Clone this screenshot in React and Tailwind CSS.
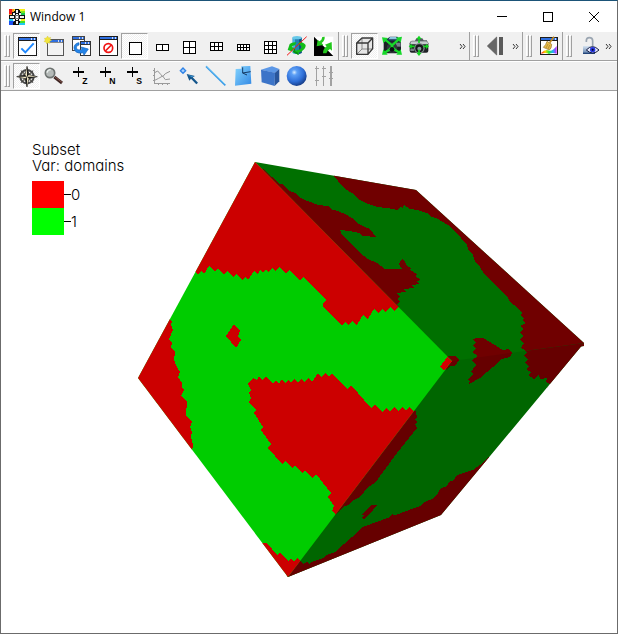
import React, { useState } from 'react';

// Every toolbar icon is drawn on a 60 x 60 grid and shown at 20px
function Icon({ children, crisp }) {
    return (
        <svg viewBox="0 0 60 60" className="w-5 h-5 overflow-visible shrink-0" fill="none" shapeRendering={crisp ? "crispEdges" : "auto"} aria-hidden="true">
            {children}
        </svg>
    );
}

// Small window with a blue title bar, used in several icons
function MiniWindow({ x, y, w, h, edge = "#1c1c1c" }) {
    return (
        <g shapeRendering="crispEdges">
            <rect x={x} y={y} width={w} height={h} fill={edge} />
            <rect x={x + 3} y={y + 12} width={w - 6} height={h - 15} fill="#fff" />
            <rect x={x + 3} y={y + 3} width={w - 6} height="6" fill="#2f6fe0" />
            <rect x={x + w - 18} y={y + 3} width="3" height="6" fill="#cfdcf5" />
            <rect x={x + w - 9} y={y + 3} width="3" height="6" fill="#cfdcf5" />
        </g>
    );
}

// Layout icon: a box split in cols x rows
function GridIcon({ x, y, w, h, cols, rows }) {
    const lines = [];
    for (let i = 1; i < cols; i++) lines.push(<path key={`c${i}`} d={`M${x + (w * i) / cols} ${y}v${h}`} />);
    for (let i = 1; i < rows; i++) lines.push(<path key={`r${i}`} d={`M${x} ${y + (h * i) / rows}h${w}`} />);
    return (
        <Icon crisp>
            <g stroke="#000" strokeWidth="3">
                <rect x={x} y={y} width={w} height={h} fill="#fff" />
                {lines}
            </g>
        </Icon>
    );
}

function AxisIcon({ letter }) {
    return (
        <Icon>
            <path d="M22 2v32M6 18h32" stroke="#000" strokeWidth="4" shapeRendering="crispEdges" />
            <text x="34" y="53" fill="#000" fontSize="26" fontWeight="700" fontFamily="Liberation Sans, sans-serif">{letter}</text>
        </Icon>
    );
}

const icons = {
    active: (
        <Icon>
            <MiniWindow x={3} y={2} w={57} h={59} />
            <path d="M13 37L25 49L50 22" stroke="#1e88ff" strokeWidth="6" />
        </Icon>
    ),
    newWindow: (
        <Icon>
            <MiniWindow x={9} y={8} w={50} h={52} edge="#555" />
            <rect x="12" y="20" width="44" height="37" fill="#f2f2f2" />
            <path d="M11 0l3 6 6-2-2 6 5 3-6 3 1 6-6-2-4 4-2-6-6-1 4-5-3-5 6-1z" fill="#f3e63c" stroke="#c9b92a" />
        </Icon>
    ),
    clone: (
        <Icon>
            <MiniWindow x={3} y={1} w={40} h={43} edge="#444" />
            <MiniWindow x={27} y={15} w={32} h={45} edge="#333" />
            <path d="M24 20C4 22 4 48 24 51q6 1 12-1l3 8 13-19-21-6 2 8q-14 3-17-4-2-8 8-10z" fill="#2484e8" stroke="#1663ba" strokeWidth="2" />
        </Icon>
    ),
    remove: (
        <Icon>
            <MiniWindow x={3} y={1} w={56} h={60} />
            <circle cx="31" cy="36" r="13" stroke="#f01414" strokeWidth="5" />
            <path d="M22 45L40 27" stroke="#f01414" strokeWidth="5" />
        </Icon>
    ),
    one: <GridIcon x={14} y={18} w={36} h={36} cols={1} rows={1} />,
    two: <GridIcon x={13} y={24} w={36} h={18} cols={2} rows={1} />,
    four: <GridIcon x={13} y={15} w={36} h={36} cols={2} rows={2} />,
    six: <GridIcon x={13} y={20} w={36} h={24} cols={3} rows={2} />,
    eight: <GridIcon x={13} y={24} w={36} h={18} cols={4} rows={2} />,
    nine: <GridIcon x={13} y={15} w={36} h={36} cols={3} rows={3} />,
    spin: (
        <Icon>
            <path d="M17 5v46q13 6 27 0V5z" fill="#2380b4" />
            <path d="M17 5v46l7 3V5z" fill="#45b4e0" />
            <path d="M36 5h8v46l-8 3z" fill="#134d80" />
            <ellipse cx="30" cy="5" rx="14" ry="5" fill="#67c8e8" />
            <path d="M2 42L8 24q8-7 20-5l-4 9q-8 0-10 5l8 3-8 10z" fill="#12bd18" />
            <path d="M24 36l2 8q14-2 18-10-2-7-10-9l2-7q14 0 20 9 2 14-22 24l1 6-18-9z" fill="#12bd18" />
            <path d="M24 36l-6 12 17 9-1-6-10-5z" fill="#088c10" />
            <path d="M0 58L59 2" stroke="#f01818" strokeWidth="3" />
        </Icon>
    ),
    invert: (
        <Icon>
            <rect x="0" y="2" width="58" height="58" fill="#fff" />
            <path d="M0 2v58h58z" fill="#000" />
            <path d="M32 2q1 12-9 19l5 6-20 4 3-20 5 5q8-4 9-13z" fill="#22c81c" />
            <path d="M27 52q0-14 11-21l-5-5 20-8 1 26-6-5q-8 4-11 13z" fill="#22c81c" />
        </Icon>
    ),
    box: (
        <Icon>
            <path d="M5 21L21 6h32v32L40 55H5z" fill="#e6e6e6" />
            <path d="M21 6v33h32M21 39L5 55" stroke="#8a8a8a" strokeWidth="3" />
            <path d="M5 21h34v34H5zM5 21L21 6h32L39 21M53 6v32L39 55" stroke="#3a3a3a" strokeWidth="4" strokeLinejoin="round" />
        </Icon>
    ),
    cameraCross: (
        <Icon>
            <path d="M10 12L24 2h22l8 10v10H10z" fill="#1d3550" />
            <path d="M24 3h18l4 7H20z" fill="#8cc4e0" />
            <rect x="5" y="16" width="52" height="36" rx="4" fill="#1b1f24" />
            <rect x="42" y="20" width="14" height="12" fill="#77808a" />
            <circle cx="30" cy="35" r="16" fill="#30363c" />
            <path d="M8 10Q24 22 30 28Q40 20 52 8M8 50Q22 44 30 32Q40 44 52 50" stroke="#17d82a" strokeWidth="7" />
            <path d="M0 4l18 2L4 22zM60 2L42 5l14 15zM0 56l17 0L4 40zM60 56l-17 0 13-16z" fill="#17d82a" />
            <circle cx="30" cy="40" r="7" fill="#0c1014" />
        </Icon>
    ),
    cameraPan: (
        <Icon>
            <path d="M8 14h10l4-7h18l4 6h10v8H6z" fill="#555c61" />
            <rect x="2" y="16" width="56" height="34" rx="6" fill="#202326" />
            <path d="M4 20q0-4 6-4h40q6 0 7 4v5H4z" fill="#c4cacd" />
            <rect x="4" y="38" width="11" height="7" fill="#767e83" />
            <circle cx="31" cy="37" r="16" fill="#7f878c" />
            <circle cx="31" cy="37" r="12" fill="#15181a" />
            <circle cx="31" cy="38" r="6" fill="#8d979d" />
            <path d="M30 6v15M30 41v14M4 31h13M43 31h13" stroke="#12d51f" strokeWidth="5" />
            <path d="M30-1l8 10H22zM30 60l8-10H22zM-1 31l9-8v16zM60 31l-9-8v16z" fill="#12d51f" />
        </Icon>
    ),
    stepBack: (
        <Icon>
            <path d="M4 30L32 3v54z" fill="#666" stroke="#555" strokeWidth="2" />
            <rect x="39" y="3" width="12" height="54" fill="#5a5a5a" />
        </Icon>
    ),
    clear: (
        <Icon>
            <defs>
                <linearGradient id="rainbow" x1="0" x2="1" y1="0" y2="0">
                    <stop offset="0" stopColor="#ff2020" />
                    <stop offset=".25" stopColor="#ffd800" />
                    <stop offset=".5" stopColor="#25e83c" />
                    <stop offset=".75" stopColor="#20b0ff" />
                    <stop offset="1" stopColor="#d020ff" />
                </linearGradient>
            </defs>
            <MiniWindow x={2} y={2} w={54} h={56} />
            <path d="M7 50q12-12 24-6 10 2 22-14v23q-14-5-23 1-9-6-23-1z" fill="url(#rainbow)" />
            <path d="M45 2L32 20" stroke="#c08a20" strokeWidth="5" />
            <path d="M24 16l14 9q0 12-7 17L13 34q8-7 11-18z" fill="#e8bc48" stroke="#96702a" strokeWidth="2" />
            <path d="M27 24l-6 12M32 27l-5 12" stroke="#a67c2e" strokeWidth="2" />
        </Icon>
    ),
    lock: (
        <Icon>
            <defs>
                <linearGradient id="lockBody" x1="0" x2="0" y1="0" y2="1">
                    <stop offset="0" stopColor="#d8e4f2" />
                    <stop offset="1" stopColor="#5a7ca8" />
                </linearGradient>
            </defs>
            <path d="M22 18v-4q0-9 9-9 10 0 10 10v16" stroke="#9aa5b1" strokeWidth="5" />
            <rect x="12" y="30" width="36" height="23" fill="url(#lockBody)" />
            <rect x="12" y="50" width="36" height="4" fill="#24457a" />
            <path d="M22 42q18-20 38 0-18 18-38 0z" fill="#e6ecff" stroke="#151a40" strokeWidth="3" />
            <circle cx="41" cy="41" r="8" fill="#2736e0" />
            <circle cx="41" cy="41" r="3" fill="#05051c" />
        </Icon>
    ),
    navigate: (
        <Icon>
            <circle cx="30" cy="32" r="20" stroke="#4a4a4a" strokeWidth="6" />
            <circle cx="30" cy="32" r="12" stroke="#777" strokeWidth="2" />
            <path d="M12 14l16 12 2-3 4 3 14-12-12 15 3 3-3 4 12 14-14-12-4 4-3-4-15 12 12-14-3-4 3-3z" fill="#d8ceaa" stroke="#333" strokeWidth="2" />
            <path d="M30 1l6 25 25 6-25 6-6 25-6-25-25-6 25-6z" fill="#f2e8c4" stroke="#222" strokeWidth="2" />
            <path d="M30 1v31l6-6zM60 32H30l6 6zM30 62V32l-6 6zM0 32h30l-6-6z" fill="#1c1c1c" />
        </Icon>
    ),
    zoom: (
        <Icon>
            <path d="M31 33L54 51" stroke="#3d2422" strokeWidth="9" />
            <path d="M33 33L54 49" stroke="#8a5a50" strokeWidth="3" />
            <circle cx="18" cy="21" r="14" fill="#b5bab8" stroke="#6e7371" strokeWidth="5" />
            <path d="M9 20q2-9 11-9" stroke="#eef3f1" strokeWidth="4" />
        </Icon>
    ),
    zonePick: <AxisIcon letter="Z" />,
    nodePick: <AxisIcon letter="N" />,
    spreadsheetPick: <AxisIcon letter="S" />,
    lineout: (
        <Icon>
            <path d="M7 6v46h47M3 14h4M3 28h4M3 42h4M18 52v5M32 52v5M46 52v5" stroke="#9a9a9a" strokeWidth="3" shapeRendering="crispEdges" />
            <path d="M8 20l9-5 9 10 6 7 8-9 14-7" stroke="#929292" strokeWidth="3" />
            <path d="M8 43l12-6 12-7 8 11 14-2" stroke="#999" strokeWidth="3" />
        </Icon>
    ),
    point: (
        <Icon>
            <path d="M12 6l8 8-8 8-8-8z" fill="#a8d0ff" stroke="#2f83e6" strokeWidth="4" />
            <path d="M23 24l8 20 5-6 16 17 5-5-16-16 7-4z" fill="#14568c" />
            <path d="M27 27l18 4-7 3z" fill="#3c92cf" />
        </Icon>
    ),
    line: (
        <Icon>
            <path d="M0 1L58 58" stroke="#3c9be6" strokeWidth="5" />
            <path d="M1 0L56 53" stroke="#8fe0ff" strokeWidth="2" />
        </Icon>
    ),
    plane: (
        <Icon>
            <defs>
                <linearGradient id="planeFill" x1="0" x2="1" y1="0" y2="1">
                    <stop offset="0" stopColor="#86d6ff" />
                    <stop offset="1" stopColor="#3288e4" />
                </linearGradient>
            </defs>
            <path d="M8 9l17-1V1l27-1 3 53-49 6z" fill="url(#planeFill)" />
            <path d="M29 4v17l24-4M29 21l13 6" stroke="#153b66" strokeWidth="3" />
        </Icon>
    ),
    cube: (
        <Icon>
            <path d="M3 11L36 1l22 8-13 12z" fill="#5c97e6" />
            <path d="M3 11l42 9-1 40L5 49z" fill="#3c74c8" />
            <path d="M45 20L58 9v37L44 60z" fill="#28559c" />
        </Icon>
    ),
    sphere: (
        <Icon>
            <defs>
                <radialGradient id="ball" cx=".38" cy=".32" r=".7">
                    <stop offset="0" stopColor="#d8ecff" />
                    <stop offset=".2" stopColor="#5c9ff5" />
                    <stop offset=".65" stopColor="#2f6fd8" />
                    <stop offset="1" stopColor="#173c86" />
                </radialGradient>
            </defs>
            <circle cx="29" cy="30" r="30" fill="url(#ball)" />
        </Icon>
    ),
    sliders: (
        <Icon crisp>
            <path d="M8 1v58M29 1v58M51 1v58M2 8h12M2 44h12M23 8h12M23 32h12M45 20h12M45 38h12" stroke="#a2a2a2" strokeWidth="4" />
        </Icon>
    ),
};

const layoutTools = [
    ["active", "Make window active"],
    ["newWindow", "New window"],
    ["clone", "Clone window"],
    ["remove", "Delete window"],
    ["one", "Layout 1x1"],
    ["two", "Layout 1x2"],
    ["four", "Layout 2x2"],
    ["six", "Layout 2x3"],
    ["eight", "Layout 2x4"],
    ["nine", "Layout 3x3"],
    ["spin", "Spin"],
    ["invert", "Invert background"],
];

const modeTools = [
    ["navigate", "Navigate"],
    ["zoom", "Zoom"],
    ["zonePick", "Zone pick"],
    ["nodePick", "Node pick"],
    ["spreadsheetPick", "Spreadsheet pick"],
    ["lineout", "Lineout"],
    ["point", "Point tool"],
    ["line", "Line tool"],
    ["plane", "Plane tool"],
    ["cube", "Box tool"],
    ["sphere", "Sphere tool"],
    ["sliders", "Axis restriction tool"],
];

const viewTools = [
    ["box", "Perspective"],
    ["cameraCross", "Reset view"],
    ["cameraPan", "Recenter view"],
];

function ToolButton({ icon, label, pressed, onClick }) {
    return (
        <button type="button" aria-label={label} aria-pressed={!!pressed} onClick={onClick} className={`flex items-center justify-center w-[27px] h-[26px] shrink-0 border ${pressed ? "border-t-[#a0a0a0] border-l-[#a0a0a0] border-b-white border-r-white bg-[repeating-conic-gradient(#fff_0_25%,#f0f0f0_0_50%)] bg-[length:2px_2px]" : "border-transparent"}`}>
            {icons[icon]}
        </button>
    );
}

function MoreButton() {
    return (
        <button type="button" aria-label="More tools" className="flex items-center justify-center w-[13px] h-[26px] shrink-0">
            <svg viewBox="0 0 7 5" className="w-[7px] h-[5px]" fill="none" stroke="#333" aria-hidden="true">
                <path d="M1 0l2 2.500l-2 2.500M4 0l2 2.500l-2 2.500" />
            </svg>
        </button>
    );
}

function Toolbar({ label, className = "", children }) {
    return (
        <div role="toolbar" aria-label={label} className={`flex items-center h-7 pl-[3px] ${className}`}>
            <div className="flex mr-[3px] shrink-0">
                <span className="w-[3px] h-[22px] border-l border-t border-white border-r border-b border-r-[#a0a0a0] border-b-[#a0a0a0]" />
                <span className="w-[3px] h-[22px] border-l border-t border-white border-r border-b border-r-[#a0a0a0] border-b-[#a0a0a0]" />
            </div>
            {children}
        </div>
    );
}

function TitleBar() {
    return (
        <header className="flex items-center h-[31px] pl-2 bg-white">
            <svg viewBox="0 0 16 16" className="w-4 h-4 shrink-0" shapeRendering="crispEdges" aria-hidden="true">
                <rect width="16" height="16" fill="#111" />
                <path d="M0 0h3v5H0z" fill="#f01818" />
                <path d="M3 0h2v3H3zM0 5h3v1H0z" fill="#ff9a1e" />
                <path d="M5 0h1v2H5zM10 0h6v2h-5z" fill="#f6ef1c" />
                <path d="M11 2h5v2h-4z" fill="#7ee61c" />
                <path d="M12 4h4v2h-4z" fill="#18c850" />
                <path d="M0 10h4v2H0z" fill="#22c6e8" />
                <path d="M0 12h5v1H0zM0 13h4v3H0z" fill="#1c50f0" />
                <path d="M12 10h4v2h-4z" fill="#f6ef1c" />
                <path d="M11 12h5v2h-5z" fill="#40dc28" />
                <path d="M10 14h6v2h-6z" fill="#20c8f0" />
                <path d="M7 1h2v3H7zM4 4h2v2H4zM10 4h2v2h-2zM1 7h4v2H1zM11 7h4v2h-4zM4 10h2v2H4zM10 10h2v2h-2zM7 12h2v3H7zM7 5h2v1H7zM7 10h2v1H7z" fill="#f4f4f4" />
                <path d="M6 6h4v4H6z" fill="#777" />
                <path d="M7 7h2v2H7z" fill="#fff" />
            </svg>
            <h1 className="ml-[5px] flex-1 font-['Open_Sans',sans-serif] text-xs text-black">Window 1</h1>
            <button type="button" aria-label="Minimize" className="flex items-center justify-center w-[46px] h-full">
                <svg viewBox="0 0 10 10" className="w-[10px] h-[10px]" stroke="#000" shapeRendering="crispEdges"><path d="M0 4.500h10" /></svg>
            </button>
            <button type="button" aria-label="Maximize" className="flex items-center justify-center w-[46px] h-full">
                <svg viewBox="0 0 10 10" className="w-[10px] h-[10px]" stroke="#000" fill="none" shapeRendering="crispEdges"><rect x=".5" y=".5" width="9" height="9" /></svg>
            </button>
            <button type="button" aria-label="Close" className="flex items-center justify-center w-[46px] h-full">
                <svg viewBox="0 0 10 10" className="w-[10px] h-[10px]" stroke="#000"><path d="M0 0l10 10M10 0L0 10" /></svg>
            </button>
        </header>
    );
}

function Legend() {
    return (
        <section aria-label="Legend" className="w-[106px] shrink-0 mt-[51px] font-['Inter',sans-serif] font-light text-[15px] leading-4 text-black [font-feature-settings:'cv11']">
            <p>Subset</p>
            <p className="whitespace-nowrap">Var: domains</p>
            <ul className="mt-[7px]">
                <li className="flex items-center h-[27px]">
                    <span className="w-8 h-full bg-[#ff0000]" />
                    <span className="w-[7px] h-px bg-black" />
                    <span>0</span>
                </li>
                <li className="flex items-center h-[27px]">
                    <span className="w-8 h-full bg-[#00ff00]" />
                    <span className="w-[7px] h-px bg-black" />
                    <span>1</span>
                </li>
            </ul>
        </section>
    );
}

function CubePlot() {
    return (
        <svg viewBox="138 161 446 417" role="img" aria-label="Subset plot of domains" className="flex-1 min-w-0 mt-[70px] self-start" shapeRendering="crispEdges">
            <defs>
                {/* The right faces run a little under their neighbours so that no gap shows */}
                <clipPath id="topFace"><path d="M255 162L416 190L584 343L584 346L452 364L448 361Z" /></clipPath>
                <clipPath id="lowFace"><path d="M448 361L452 361L584 343L441 515L288 577L286 574Z" /></clipPath>
                <clipPath id="frontFace"><path d="M255 162L452 361L288 577L138 378Z" /></clipPath>
            </defs>

            {/* Upper right face */}
            <g clipPath="url(#topFace)">
                <rect x="250" y="160" width="336" height="210" fill="#007000" />
                <g fill="#700000">
                    <path d="M334 176L338 181L345 189L352 193L360 200L368 204L377 207L387 208L398 210L400 207L403 208L404 205L407 207L410 209L417 210L427 213L432 217L438 219L448 225L458 234L464 242L467 244L468 250L473 255L475 261L480 267L483 272L490 280L498 288L508 298L510 302L517 307L522 313L521 316L524 318L523 321L526 323L520 326L523 329L520 333L523 336L520 340L524 343L521 348L528 352L528 370L600 370L600 160L330 160Z" />
                    <path d="M255 162L280 184L283 184L288 190L295 193L301 198L305 200L313 203L318 205L328 206L333 210L338 211L347 215L352 218L357 223L365 227L370 229L376 237L363 236L359 233L350 231L340 230L342 235L352 245L360 253L368 259L377 263L385 269L402 269L399 264L402 259L404 260L407 266L411 268L410 270L417 274L415 276L421 280L416 281L419 284L412 285L414 288L403 289L406 292L396 293L400 297L397 299L400 302L397 304L399 307L390 310L240 162Z" />
                </g>
            </g>

            {/* Lower right face */}
            <g clipPath="url(#lowFace)">
                <rect x="285" y="340" width="300" height="240" fill="#006600" />
                <g fill="#660000">
                    <path d="M521 350L527 352L524 356L528 359L525 363L529 366L526 369L531 372L528 375L534 379L539 375L540 379L547 378L546 382L550 384L546 388L600 388L600 330Z" />
                    <path d="M415 409L417 417L415 420L417 422L415 424L417 428L397 453L375 483L368 487L360 497L354 500L348 505L343 507L336 515L330 515L330 480L410 409Z" />
                    <path d="M362 515L366 510L372 505L377 505L374 508L373 511L364 519L362 518L364 515Z" />
                    <path d="M389 517L392 514L394 515L391 518Z" />
                    <path d="M300 561L303 564L307 562L309 564L312 562L323 558L327 555L335 552L352 537L363 527L390 517L420 506L425 502L432 499L437 495L440 489L447 486L450 481L453 481L457 475L473 470L480 465L489 457L500 480L441 530L280 590L280 570Z" />
                </g>
            </g>

            {/* Patches that cross the edge between the two right faces */}
            {[["topFace", "#700000"], ["lowFace", "#660000"]].map(([face, color]) => (
                <g key={face} clipPath={`url(#${face})`} fill={color}>
                    <path d="M472 339L478 338L483 338L490 342L498 347L503 350L508 349L512 353L510 357L502 359L493 367L480 378L469 384L470 381L467 380L473 374L471 372L476 365L472 360L478 356L472 352L476 348L473 346L476 342Z" />
                    <path d="M446 356L455 356L459 360L455 366L450 366L446 371Z" />
                </g>
            ))}

            {/* Front face */}
            <g clipPath="url(#frontFace)">
                <rect x="138" y="160" width="316" height="420" fill="#00cc00" />
                <g fill="#cc0000">
                    <path d="M196 272L198 275L201 271L204 274L209 266L215 272L218 268L224 275L227 271L233 277L236 274L242 280L246 277L248 280L254 271L258 274L260 270L263 273L266 269L268 272L272 268L276 271L279 267L286 274L289 270L300 281L303 277L326 300L323 303L323 306L342 326L345 322L349 325L352 321L357 325L363 315L368 319L374 309L378 313L382 309L386 312L390 307L394 311L398 307L410 307L410 150L180 150L180 272Z" />
                    <path d="M165 319L170 319L172 322L171 325L173 330L169 339L172 343L171 347L175 352L174 360L177 367L180 372L178 377L182 383L182 388L184 390L181 396L187 402L186 415L192 422L190 427L192 432L191 437L193 445L192 452L130 452L130 319Z" />
                    <path d="M234 324L240 331L238 336L241 340L236 348L226 336Z" />
                    <path d="M248 384L253 378L257 380L259 376L262 380L266 376L273 384L276 380L279 384L282 379L285 383L288 380L291 383L294 379L298 382L301 379L304 382L308 378L312 382L318 373L321 377L325 373L329 377L332 373L347 389L351 385L371 408L375 404L382 412L386 408L390 411L394 407L398 411L402 407L406 411L409 407L414 411L420 411L340 517L336 514L332 511L334 506L328 497L331 493L316 474L312 478L305 470L302 473L295 465L292 468L285 461L282 464L268 448L271 444L261 430L263 427L254 413L256 410L249 402L251 398L249 393L251 390Z" />
                    <path d="M262 543L267 543L277 555L280 553L287 560L288 561L291 558L294 562L297 558L301 561L305 580L262 580Z" />
                </g>
            </g>
            <path d="M440 367L447 357L452 361L444 371Z" fill="#d40000" />
        </svg>
    );
}

export default function App() {
    const [mode, setMode] = useState("navigate");
    const [layout, setLayout] = useState("one");

    return (
        <div className="flex flex-col min-h-screen border border-[#6b6b6b] border-t-[#1b5378] bg-white">
            <TitleBar />

            <div className="bg-[#f0f0f0]">
                <div className="flex border-b border-b-[#a0a0a0]">
                    <Toolbar label="Window" className="pr-px border-r border-r-[#a0a0a0]">
                        {layoutTools.map(([icon, label]) => (
                            <ToolButton key={icon} icon={icon} label={label} pressed={icon === "active" || icon === layout} onClick={() => setLayout(icon)} />
                        ))}
                    </Toolbar>
                    <Toolbar label="View" className="flex-1 border-r border-r-[#a0a0a0]">
                        {viewTools.map(([icon, label]) => (
                            <ToolButton key={icon} icon={icon} label={label} pressed={icon === "box"} />
                        ))}
                        <div className="flex-1" />
                        <MoreButton />
                    </Toolbar>
                    <Toolbar label="Animation" className="border-r border-r-[#a0a0a0]">
                        <ToolButton icon="stepBack" label="Step back" />
                        <MoreButton />
                    </Toolbar>
                    <Toolbar label="Clear" className="border-r border-r-[#a0a0a0]">
                        <ToolButton icon="clear" label="Clear plots" />
                    </Toolbar>
                    <Toolbar label="Lock" className="pr-[2px]">
                        <ToolButton icon="lock" label="Lock view" />
                        <MoreButton />
                    </Toolbar>
                </div>
                <div className="border-t border-t-white border-b border-b-[#a0a0a0]">
                    <Toolbar label="Mode">
                        {modeTools.map(([icon, label]) => (
                            <ToolButton key={icon} icon={icon} label={label} pressed={icon === mode} onClick={() => setMode(icon)} />
                        ))}
                    </Toolbar>
                </div>
            </div>

            <main className="flex flex-1 pl-[31px] pr-[33px] bg-white">
                <Legend />
                <CubePlot />
            </main>
        </div>
    );
}
